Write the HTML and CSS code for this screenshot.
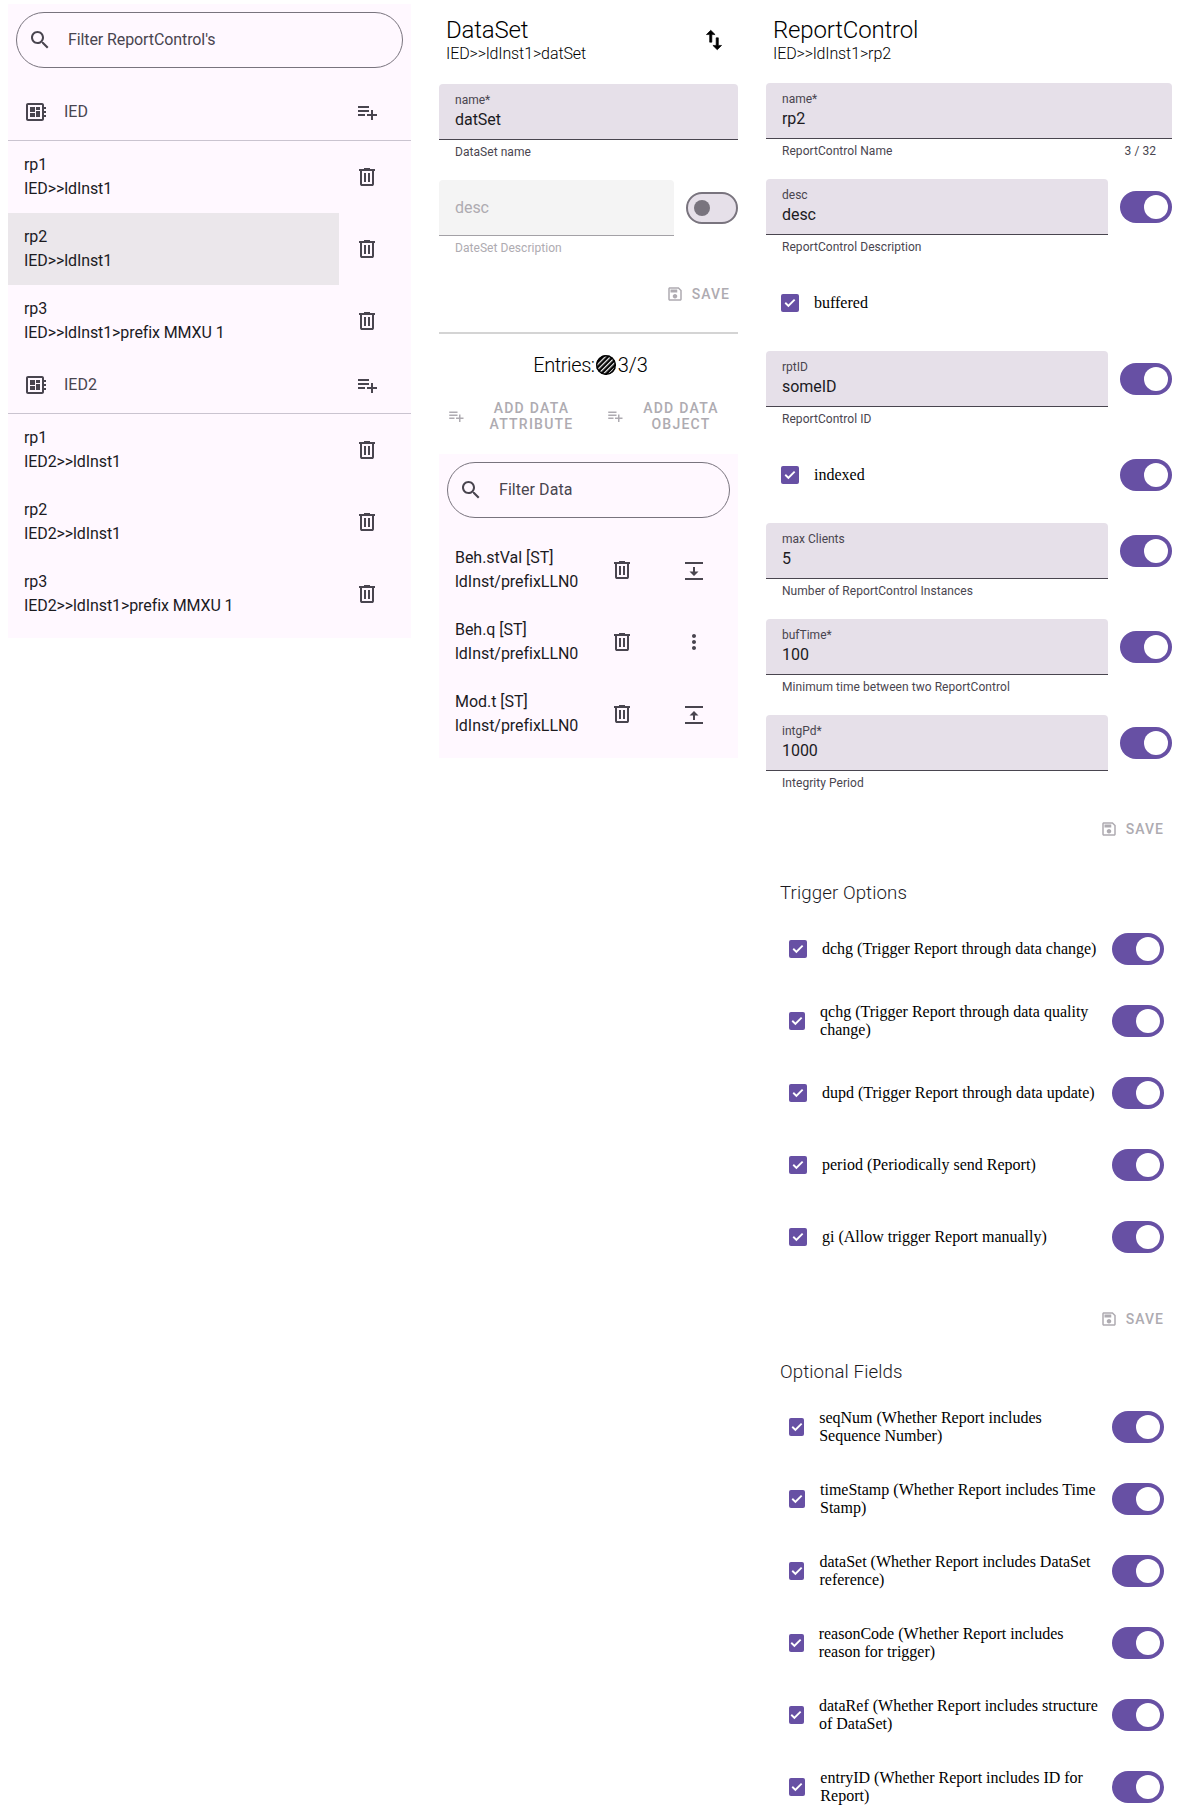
FILE: index.html
```html
<!DOCTYPE html>
<html lang="en">
<head>
<meta charset="utf-8">
<title>ReportControl editor</title>
<link rel="stylesheet" href="styles.css">
</head>
<body>
<svg class="defs" width="0" height="0" aria-hidden="true">
  <symbol id="i-search" viewBox="0 0 24 24"><path d="M15.5 14h-.79l-.28-.27C15.41 12.59 16 11.11 16 9.5 16 5.91 13.09 3 9.5 3S3 5.91 3 9.5 5.91 16 9.5 16c1.61 0 3.09-.59 4.23-1.57l.27.28v.79l5 4.99L20.49 19l-4.99-5zm-6 0C7.01 14 5 11.99 5 9.5S7.01 5 9.5 5 14 7.01 14 9.5 11.99 14 9.5 14z"/></symbol>
  <symbol id="i-del" viewBox="0 0 24 24"><path d="M7 21q-.825 0-1.412-.587Q5 19.825 5 19V6H4V4h5V3h6v1h5v2h-1v13q0 .825-.587 1.413Q17.825 21 17 21ZM17 6H7v13h10ZM9 17h2V8H9Zm4 0h2V8h-2ZM7 6v13Z"/></symbol>
  <symbol id="i-add" viewBox="0 0 24 24"><path d="M14 10H3v2h11v-2zm0-4H3v2h11V6zm4 8v-4h-2v4h-4v2h4v4h2v-4h4v-2h-4zM3 16h7v-2H3v2z"/></symbol>
  <symbol id="i-board" viewBox="0 0 24 24"><path d="M22 9V7h-2V5c0-1.1-.9-2-2-2H4c-1.1 0-2 .9-2 2v14c0 1.1.9 2 2 2h14c1.1 0 2-.9 2-2v-2h2v-2h-2v-2h2v-2h-2V9h2zm-4 10H4V5h14v14zM6 13h5v4H6zm6-6h4v3h-4zM6 7h5v5H6zm6 4h4v6h-4z"/></symbol>
  <symbol id="i-swap" viewBox="0 0 24 24"><path d="M16 17.01V10h-2v7.01h-3L15 21l4-3.99h-3zM9 3L5 6.99h3V14h2V6.99h3L9 3z"/></symbol>
  <symbol id="i-down" viewBox="0 0 24 24"><path d="M3 4h18v2H3zM3 20h18v2H3zM11 9h2v4.500h3.500l-4.500 4.500-4.500-4.500h3.500z"/></symbol>
  <symbol id="i-up" viewBox="0 0 24 24"><path d="M3 4h18v2H3zM3 20h18v2H3zM11 18h2v-4.500h3.500l-4.500-4.500-4.500 4.500h3.500z"/></symbol>
  <symbol id="i-more" viewBox="0 0 24 24"><path d="M12 8c1.1 0 2-.9 2-2s-.9-2-2-2-2 .9-2 2 .9 2 2 2zm0 2c-1.1 0-2 .9-2 2s.9 2 2 2 2-.9 2-2-.9-2-2-2zm0 6c-1.1 0-2 .9-2 2s.9 2 2 2 2-.9 2-2-.9-2-2-2z"/></symbol>
  <symbol id="i-save" viewBox="0 0 24 24"><path d="M17 3H5c-1.11 0-2 .9-2 2v14c0 1.1.89 2 2 2h14c1.1 0 2-.9 2-2V7l-4-4zm2 16H5V5h11.17L19 7.83V19zm-7-7c-1.66 0-3 1.34-3 3s1.34 3 3 3 3-1.34 3-3-1.34-3-3-3zM6 6h9v4H6z"/></symbol>
  <symbol id="i-check" viewBox="0 0 18 18"><path d="M3.6 9.4l1.3-1.3 2.5 2.5 5.6-5.7 1.3 1.4-6.9 6.9z"/></symbol>
  <pattern id="hatch" width="3.6" height="3.6" patternUnits="userSpaceOnUse" patternTransform="rotate(-45)"><rect width="3.6" height="3.6" fill="#000"/><rect width="3.6" height="1.3" fill="#e4e4e4"/></pattern>
</svg>
<main class="page">

  <section class="panel list-panel">
    <div class="search"><svg class="icon"><use href="#i-search"/></svg><span>Filter ReportControl's</span></div>
    <div class="group-head"><svg class="icon"><use href="#i-board"/></svg><span class="group-name">IED</span><svg class="icon end"><use href="#i-add"/></svg></div>
    <div class="item"><div class="item-text"><div>rp1</div><div>IED&gt;&gt;ldInst1</div></div><svg class="icon"><use href="#i-del"/></svg></div>
    <div class="item selected"><div class="item-text"><div>rp2</div><div>IED&gt;&gt;ldInst1</div></div><svg class="icon"><use href="#i-del"/></svg></div>
    <div class="item"><div class="item-text"><div>rp3</div><div>IED&gt;&gt;ldInst1&gt;prefix MMXU 1</div></div><svg class="icon"><use href="#i-del"/></svg></div>
    <div class="group-head"><svg class="icon"><use href="#i-board"/></svg><span class="group-name">IED2</span><svg class="icon end"><use href="#i-add"/></svg></div>
    <div class="item"><div class="item-text"><div>rp1</div><div>IED2&gt;&gt;ldInst1</div></div><svg class="icon"><use href="#i-del"/></svg></div>
    <div class="item"><div class="item-text"><div>rp2</div><div>IED2&gt;&gt;ldInst1</div></div><svg class="icon"><use href="#i-del"/></svg></div>
    <div class="item"><div class="item-text"><div>rp3</div><div>IED2&gt;&gt;ldInst1&gt;prefix MMXU 1</div></div><svg class="icon"><use href="#i-del"/></svg></div>
  </section>

  <section class="dataset">
    <header class="head head-row">
      <div><h1>DataSet</h1><p>IED&gt;&gt;ldInst1&gt;datSet</p></div>
      <svg class="icon swap"><use href="#i-swap"/></svg>
    </header>
    <div class="field-row"><div class="field-wrap"><div class="field"><label>name*</label><div class="value">datSet</div></div><div class="helper"><span>DataSet name</span></div></div></div>
    <div class="field-row"><div class="field-wrap off"><div class="field"><div class="value only">desc</div></div><div class="helper"><span>DateSet Description</span></div></div><span class="switch off"></span></div>
    <div class="save-row"><span class="save"><svg class="icon small"><use href="#i-save"/></svg>SAVE</span></div>
    <hr class="rule">
    <div class="entries"><span class="entries-label">Entries:</span><svg class="hatch-dot" viewBox="0 0 20 20"><circle cx="10" cy="10" r="10" fill="url(#hatch)"/><circle cx="10" cy="10" r="9.3" fill="none" stroke="#000" stroke-width="1.4"/></svg>3/3</div>
    <div class="add-row">
      <span class="add-btn"><svg class="icon small"><use href="#i-add"/></svg><span>ADD DATA ATTRIBUTE</span></span>
      <span class="add-btn"><svg class="icon small"><use href="#i-add"/></svg><span>ADD DATA OBJECT</span></span>
    </div>
    <div class="panel data-panel">
      <div class="search"><svg class="icon"><use href="#i-search"/></svg><span>Filter Data</span></div>
      <div class="data-item"><div class="item-text"><div>Beh.stVal [ST]</div><div>ldInst/prefixLLN0</div></div><svg class="icon"><use href="#i-del"/></svg><svg class="icon"><use href="#i-down"/></svg></div>
      <div class="data-item"><div class="item-text"><div>Beh.q [ST]</div><div>ldInst/prefixLLN0</div></div><svg class="icon"><use href="#i-del"/></svg><svg class="icon"><use href="#i-more"/></svg></div>
      <div class="data-item"><div class="item-text"><div>Mod.t [ST]</div><div>ldInst/prefixLLN0</div></div><svg class="icon"><use href="#i-del"/></svg><svg class="icon"><use href="#i-up"/></svg></div>
    </div>
  </section>

  <section class="report">
    <header class="head"><h1>ReportControl</h1><p>IED&gt;&gt;ldInst1&gt;rp2</p></header>
    <div class="field-row"><div class="field-wrap"><div class="field"><label>name*</label><div class="value">rp2</div></div><div class="helper"><span>ReportControl Name</span><span>3 / 32</span></div></div></div>
    <div class="field-row"><div class="field-wrap"><div class="field"><label>desc</label><div class="value">desc</div></div><div class="helper"><span>ReportControl Description</span></div></div><span class="switch"></span></div>
    <div class="check-row"><span class="box"><svg class="tick"><use href="#i-check"/></svg></span><span class="check-label">buffered</span></div>
    <div class="field-row"><div class="field-wrap"><div class="field"><label>rptID</label><div class="value">someID</div></div><div class="helper"><span>ReportControl ID</span></div></div><span class="switch"></span></div>
    <div class="check-row"><span class="box"><svg class="tick"><use href="#i-check"/></svg></span><span class="check-label">indexed</span><span class="switch push"></span></div>
    <div class="field-row"><div class="field-wrap"><div class="field"><label>max Clients</label><div class="value">5</div></div><div class="helper"><span>Number of ReportControl Instances</span></div></div><span class="switch"></span></div>
    <div class="field-row"><div class="field-wrap"><div class="field"><label>bufTime*</label><div class="value">100</div></div><div class="helper"><span>Minimum time between two ReportControl</span></div></div><span class="switch"></span></div>
    <div class="field-row"><div class="field-wrap"><div class="field"><label>intgPd*</label><div class="value">1000</div></div><div class="helper"><span>Integrity Period</span></div></div><span class="switch"></span></div>
    <div class="save-row"><span class="save"><svg class="icon small"><use href="#i-save"/></svg>SAVE</span></div>

    <h2 class="trigger-head">Trigger Options</h2>
    <div class="opt"><span class="box-wrap"><span class="box"><svg class="tick"><use href="#i-check"/></svg></span></span><span class="opt-label">dchg (Trigger Report through data change)</span><span class="switch"></span></div>
    <div class="opt"><span class="box-wrap"><span class="box"><svg class="tick"><use href="#i-check"/></svg></span></span><span class="opt-label">qchg (Trigger Report through data quality change)</span><span class="switch"></span></div>
    <div class="opt"><span class="box-wrap"><span class="box"><svg class="tick"><use href="#i-check"/></svg></span></span><span class="opt-label">dupd (Trigger Report through data update)</span><span class="switch"></span></div>
    <div class="opt"><span class="box-wrap"><span class="box"><svg class="tick"><use href="#i-check"/></svg></span></span><span class="opt-label">period (Periodically send Report)</span><span class="switch"></span></div>
    <div class="opt"><span class="box-wrap"><span class="box"><svg class="tick"><use href="#i-check"/></svg></span></span><span class="opt-label">gi (Allow trigger Report manually)</span><span class="switch"></span></div>
    <div class="save-row trigger-save"><span class="save"><svg class="icon small"><use href="#i-save"/></svg>SAVE</span></div>

    <h2 class="optional-head">Optional Fields</h2>
    <div class="opt"><span class="box-wrap"><span class="box"><svg class="tick"><use href="#i-check"/></svg></span></span><span class="opt-label">seqNum (Whether Report includes Sequence Number)</span><span class="switch"></span></div>
    <div class="opt"><span class="box-wrap"><span class="box"><svg class="tick"><use href="#i-check"/></svg></span></span><span class="opt-label">timeStamp (Whether Report includes Time Stamp)</span><span class="switch"></span></div>
    <div class="opt"><span class="box-wrap"><span class="box"><svg class="tick"><use href="#i-check"/></svg></span></span><span class="opt-label">dataSet (Whether Report includes DataSet reference)</span><span class="switch"></span></div>
    <div class="opt"><span class="box-wrap"><span class="box"><svg class="tick"><use href="#i-check"/></svg></span></span><span class="opt-label">reasonCode (Whether Report includes reason for trigger)</span><span class="switch"></span></div>
    <div class="opt"><span class="box-wrap"><span class="box"><svg class="tick"><use href="#i-check"/></svg></span></span><span class="opt-label">dataRef (Whether Report includes structure of DataSet)</span><span class="switch"></span></div>
    <div class="opt"><span class="box-wrap"><span class="box"><svg class="tick"><use href="#i-check"/></svg></span></span><span class="opt-label">entryID (Whether Report includes ID for Report)</span><span class="switch"></span></div>
  </section>
</main>
</body>
</html>
```
FILE: styles.css
```css
* { box-sizing: border-box; }
html, body { margin: 0; padding: 0; background: #fff; }
body { font-family: Roboto, sans-serif; color: #1c1b1f; height: 1816px; overflow: hidden; }
.defs { position: absolute; }
.page { display: grid; grid-template-columns: 403px 299px 406px; column-gap: 28px; padding: 0 8px; align-items: start; }

.icon { width: 24px; height: 24px; flex: none; fill: #49454f; display: block; }
.icon.small { width: 18px; height: 18px; }

.panel { background: #fff8ff; }
.list-panel { margin-top: 4px; padding: 8px 0; }
.search { display: flex; align-items: center; height: 56px; margin: 0 8px 16px; border: 1px solid #79747e; border-radius: 28px; padding-left: 11px; font-size: 16px; color: #49454f; }
.search span { margin: 0 0 2px 16px; }
.list-panel .search span { letter-spacing: -0.1px; }
.data-panel .search span { letter-spacing: 0.05px; }
.group-head { display: flex; align-items: center; height: 57px; padding: 0 32px 0 16px; border-bottom: 1px solid #cac4d0; font-size: 16px; color: #49454f; }
.group-name { margin: 0 0 2px 16px; flex: 1; }
.item { display: flex; align-items: center; height: 72px; }
.item-text { font-size: 16px; line-height: 24px; color: #1c1b1f; letter-spacing: -0.04px; }
.list-panel .item-text { flex: none; width: 331px; height: 72px; padding: 12px 16px; letter-spacing: -0.1px; }
.item.selected .item-text { background: #ebe7eb; }
.list-panel .item .icon { margin-left: 16px; }

.head { padding: 14px 0 0 7px; height: 84px; }
.report .head { height: 83px; }
.head h1 { margin: 0; font-size: 24px; line-height: 32px; font-weight: 300; color: #000; letter-spacing: -0.18px; }
.head p { margin: -2px 0 0; font-size: 16px; line-height: 20px; font-weight: 300; color: #000; letter-spacing: -0.1px; }
.head-row { display: flex; justify-content: space-between; }
.icon.swap { width: 26px; height: 26px; fill: #000; stroke: #000; stroke-width: 0.6; margin: 13px 11px 0 0; }

.field-row { display: flex; gap: 12px; height: 96px; }
.field-wrap { flex: 1; min-width: 0; }
.field { height: 56px; background: #e6e0e9; border-radius: 4px 4px 0 0; border-bottom: 1px solid #49454f; padding: 8px 16px 0; }
.field label { display: block; font-size: 12px; line-height: 16px; color: #49454f; }
.value { font-size: 16px; line-height: 24px; color: #1c1b1f; letter-spacing: -0.05px; }
.value.only { line-height: 40px; }
.helper { display: flex; justify-content: space-between; padding: 4px 16px 0; font-size: 12px; line-height: 16px; letter-spacing: 0.05px; color: #49454f; }
.off .field { background: #f4f4f4; border-bottom-color: #a3a1a6; }
.off .value, .off .helper { color: #aeabb1; }

.switch { flex: none; position: relative; width: 52px; height: 32px; margin-top: 12px; border-radius: 16px; background: #6750a4; }
.switch::after { content: ""; position: absolute; top: 4px; right: 4px; width: 24px; height: 24px; border-radius: 50%; background: #fff; }
.switch.off { background: #e6e0e9; border: 2px solid #79747e; }
.switch.off::after { top: 6px; left: 6px; right: auto; width: 16px; height: 16px; background: #79747e; }

.save-row { display: flex; justify-content: flex-end; align-items: center; height: 36px; }
.save { display: flex; align-items: center; gap: 8px; padding-right: 8px; font-size: 14px; font-weight: 500; letter-spacing: 1px; color: #aeabb1; }
.save .icon { fill: #aeabb1; }
.rule { margin: 20px 0 0; border: 0; height: 2px; background: #d4d4d4; }
.entries { display: flex; align-items: center; justify-content: center; height: 28px; margin-top: 17px; padding-left: 4px; font-size: 20px; font-weight: 300; color: #000; }
.entries-label { letter-spacing: -0.4px; }
.hatch-dot { width: 20px; height: 20px; margin: 0 2px 0 1px; }
.add-row { display: grid; grid-template-columns: 159px 140px; height: 48px; margin-top: 13px; }
.add-btn { display: flex; align-items: center; padding-left: 8px; font-size: 14px; font-weight: 500; line-height: 16px; letter-spacing: 1.25px; color: #aeabb1; text-align: center; }
.add-btn .icon { fill: #aeabb1; }
.add-btn span { flex: 1; padding: 0 18px; }
.data-panel { margin-top: 14px; padding: 8px 0; }
.data-item { display: flex; align-items: center; height: 72px; padding: 0 32px 0 16px; }
.data-item .item-text { flex: 1; }
.data-item .icon + .icon { margin-left: 48px; }

.check-row { display: flex; align-items: center; height: 56px; margin-bottom: 20px; padding-left: 15px; }
.check-row .box { width: 18px; }
.check-label { margin-left: 15px; font-family: "Liberation Serif", serif; font-size: 16px; color: #000; }
.switch.push { margin: 0 0 0 auto; }
.box { display: block; width: 100%; height: 18px; border-radius: 2px; background: #6750a4; position: relative; overflow: hidden; flex: none; }
.tick { position: absolute; left: 50%; top: 0; margin-left: -9px; width: 18px; height: 18px; fill: #fff; }
h2 { margin: 0 0 6px; padding-left: 14px; font-size: 18.72px; line-height: 28px; font-weight: 300; color: #1c1b1f; letter-spacing: 0.08px; }
.trigger-head { margin-top: 32px; }
.optional-head { margin: 21px 0 5px; }
.opt { display: flex; align-items: center; height: 72px; margin: 0 8px; }
.box-wrap { flex: 0 0.8 18px; min-width: 0; box-sizing: content-box; padding: 0 15px; }
.opt-label { flex: 0 1 auto; min-width: 0; margin-right: 12px; font-family: "Liberation Serif", serif; font-size: 16px; line-height: 18px; color: #000; }
.opt .switch { margin: 0 0 0 auto; }
.trigger-save { margin-top: 28px; }
```
